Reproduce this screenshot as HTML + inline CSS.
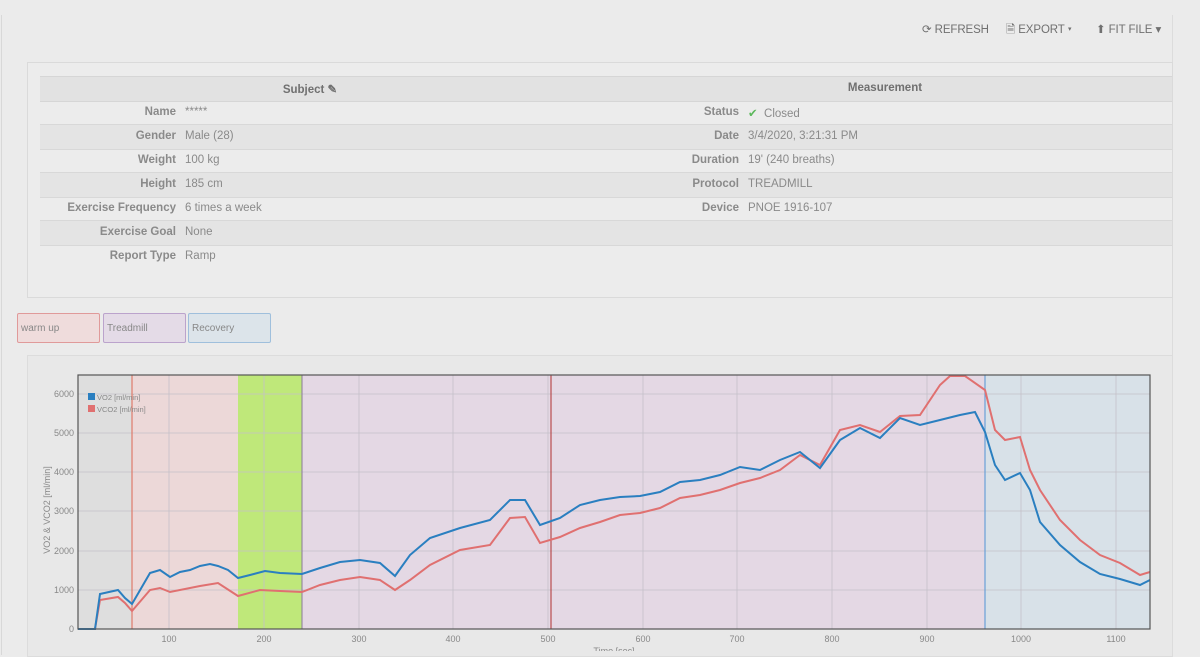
<!DOCTYPE html>
<html><head><meta charset="utf-8"><style>
body{margin:0;width:1200px;height:651px;overflow:hidden;background:#ebebeb;font-family:"Liberation Sans",sans-serif;position:relative}
.a{position:absolute}
.lbl{position:absolute;font-size:11.5px;font-weight:bold;color:#8a8a8a;text-align:right}
.val{position:absolute;font-size:11.5px;color:#8a8a8a}
.btn{position:absolute;top:22px;font-size:11.5px;color:#707070;letter-spacing:-.1px}
</style></head><body>
<div class="a" style="left:1px;top:15px;width:1px;height:640px;background:#d8d8d8"></div>
<div class="a" style="left:1172px;top:15px;width:1px;height:640px;background:#dcdcdc"></div>
<div class="btn" style="left:922px">⟳ REFRESH</div>
<div class="btn" style="left:1006px">🗎 EXPORT ▾</div>
<div class="btn" style="left:1096px">⬆ FIT FILE ▾</div>

<div class="a" style="left:27px;top:62px;width:1144px;height:234px;border:1px solid #dadada;background:#ececec"></div>
<div class="a" style="left:40px;top:76px;width:1132px;height:24px;background:#e2e2e2;border-top:1px solid #d6d6d6;border-bottom:1px solid #d6d6d6"></div>
<div class="a" style="left:40px;top:124px;width:1132px;height:24px;background:#e4e4e4;border-top:1px solid #d8d8d8;border-bottom:1px solid #d8d8d8"></div>
<div class="a" style="left:40px;top:172px;width:1132px;height:24px;background:#e4e4e4;border-top:1px solid #d8d8d8;border-bottom:1px solid #d8d8d8"></div>
<div class="a" style="left:40px;top:220px;width:1132px;height:24px;background:#e4e4e4;border-top:1px solid #d8d8d8;border-bottom:1px solid #d8d8d8"></div>
<div class="lbl" style="left:250px;top:82px;width:120px;text-align:center;color:#707070">Subject ✎</div>
<div class="lbl" style="left:820px;top:82px;width:130px;text-align:center;color:#707070">Measurement</div>

<div class="lbl" style="left:40px;width:136px;top:106px">Name</div><div class="val" style="left:185px;top:106px">*****</div>
<div class="lbl" style="left:40px;width:136px;top:130px">Gender</div><div class="val" style="left:185px;top:130px">Male (28)</div>
<div class="lbl" style="left:40px;width:136px;top:154px">Weight</div><div class="val" style="left:185px;top:154px">100 kg</div>
<div class="lbl" style="left:40px;width:136px;top:178px">Height</div><div class="val" style="left:185px;top:178px">185 cm</div>
<div class="lbl" style="left:40px;width:136px;top:202px">Exercise Frequency</div><div class="val" style="left:185px;top:202px">6 times a week</div>
<div class="lbl" style="left:40px;width:136px;top:226px">Exercise Goal</div><div class="val" style="left:185px;top:226px">None</div>
<div class="lbl" style="left:40px;width:136px;top:250px">Report Type</div><div class="val" style="left:185px;top:250px">Ramp</div>

<div class="lbl" style="left:600px;width:139px;top:106px">Status</div><div class="val" style="left:748px;top:106px"><span style="color:#5cb85c">✔</span>&nbsp;&nbsp;Closed</div>
<div class="lbl" style="left:600px;width:139px;top:130px">Date</div><div class="val" style="left:748px;top:130px">3/4/2020, 3:21:31 PM</div>
<div class="lbl" style="left:600px;width:139px;top:154px">Duration</div><div class="val" style="left:748px;top:154px">19' (240 breaths)</div>
<div class="lbl" style="left:600px;width:139px;top:178px">Protocol</div><div class="val" style="left:748px;top:178px">TREADMILL</div>
<div class="lbl" style="left:600px;width:139px;top:202px">Device</div><div class="val" style="left:748px;top:202px">PNOE 1916-107</div>

<div class="a" style="left:17px;top:313px;width:81px;height:28px;border:1px solid #e09a9a;background:#efdcdc;border-radius:2px;font-size:10px;color:#888;line-height:30px;text-indent:3px">warm up</div>
<div class="a" style="left:103px;top:313px;width:81px;height:28px;border:1px solid #bba3cc;background:#e4dbe7;border-radius:2px;font-size:10px;color:#888;line-height:30px;text-indent:3px">Treadmill</div>
<div class="a" style="left:188px;top:313px;width:81px;height:28px;border:1px solid #9fbfdc;background:#dce4ea;border-radius:2px;font-size:10px;color:#888;line-height:30px;text-indent:3px">Recovery</div>

<div class="a" style="left:27px;top:355px;width:1144px;height:300px;border:1px solid #dcdcdc;background:#e8e8e8"></div>
<svg class="a" style="left:0;top:0" width="1200" height="651" font-family="Liberation Sans" font-size="9" fill="#888">
<rect x="78" y="375" width="54" height="254" fill="#dedede"/>
<rect x="132" y="375" width="106" height="254" fill="#ecd8d8"/>
<rect x="238" y="375" width="64" height="254" fill="#bfe87a"/>
<rect x="302" y="375" width="683" height="254" fill="#e4d8e4"/>
<rect x="985" y="375" width="165" height="254" fill="#d8e1e8"/>
<g stroke="#c4c0c8" stroke-width="0.8">
<line x1="169" y1="375" x2="169" y2="629"/><line x1="264" y1="375" x2="264" y2="629"/><line x1="359" y1="375" x2="359" y2="629"/><line x1="453" y1="375" x2="453" y2="629"/><line x1="548" y1="375" x2="548" y2="629"/><line x1="643" y1="375" x2="643" y2="629"/><line x1="737" y1="375" x2="737" y2="629"/><line x1="832" y1="375" x2="832" y2="629"/><line x1="927" y1="375" x2="927" y2="629"/><line x1="1021" y1="375" x2="1021" y2="629"/><line x1="1116" y1="375" x2="1116" y2="629"/>
<line x1="78" y1="590" x2="1150" y2="590"/><line x1="78" y1="551" x2="1150" y2="551"/><line x1="78" y1="511" x2="1150" y2="511"/><line x1="78" y1="472" x2="1150" y2="472"/><line x1="78" y1="433" x2="1150" y2="433"/><line x1="78" y1="394" x2="1150" y2="394"/>
</g>
<line x1="132" y1="375" x2="132" y2="629" stroke="#e07a6a" stroke-width="1.2"/>
<line x1="551" y1="375" x2="551" y2="629" stroke="#b03030" stroke-width="1"/>
<line x1="302" y1="375" x2="302" y2="629" stroke="#8a7a9a" stroke-width="1"/>
<line x1="985" y1="375" x2="985" y2="629" stroke="#6aa0d8" stroke-width="1.2"/>
<polyline fill="none" stroke="#e07070" stroke-width="2" points="78,629 95,629 100,600 118,597 125,603 132,611 150,590 160,588 170,592 200,586 218,583 238,596 260,590 280,591 302,592 320,585 340,580 360,577 380,580 395,590 410,580 430,565 460,550 490,545 510,518 525,517 540,543 560,537 580,528 600,522 620,515 640,513 660,508 680,498 700,495 720,490 740,483 760,478 780,470 800,455 820,465 840,430 860,425 880,432 900,416 920,415 940,385 950,376 965,376 985,390 995,430 1005,440 1020,437 1030,470 1040,490 1060,520 1080,540 1100,555 1120,563 1140,575 1150,572"/>
<polyline fill="none" stroke="#2a7fc0" stroke-width="2" points="78,629 95,629 100,594 118,590 125,598 132,604 150,573 160,570 170,577 180,572 190,570 200,566 210,564 218,566 228,570 238,578 250,575 265,571 280,573 302,574 320,568 340,562 360,560 380,563 395,576 410,555 430,538 460,528 490,520 510,500 525,500 540,525 560,518 580,505 600,500 620,497 640,496 660,492 680,482 700,480 720,475 740,467 760,470 780,460 800,452 820,468 840,440 860,428 880,438 900,418 920,425 940,420 960,415 975,412 985,432 995,465 1005,480 1020,473 1030,490 1040,522 1060,545 1080,562 1100,574 1120,579 1140,585 1150,580"/>
<rect x="78" y="375" width="1072" height="254" fill="none" stroke="#555" stroke-width="1.2"/>
<rect x="88" y="393" width="7" height="7" fill="#2a7fc0"/><rect x="88" y="405" width="7" height="7" fill="#e07070"/>
<text x="97" y="400" font-size="7.5">VO2 [ml/min]</text><text x="97" y="412" font-size="7.5">VCO2 [ml/min]</text>
<g text-anchor="end"><text x="74" y="632">0</text><text x="74" y="593">1000</text><text x="74" y="554">2000</text><text x="74" y="514">3000</text><text x="74" y="475">4000</text><text x="74" y="436">5000</text><text x="74" y="397">6000</text></g>
<g text-anchor="middle"><text x="169" y="642">100</text><text x="264" y="642">200</text><text x="359" y="642">300</text><text x="453" y="642">400</text><text x="548" y="642">500</text><text x="643" y="642">600</text><text x="737" y="642">700</text><text x="832" y="642">800</text><text x="927" y="642">900</text><text x="1021" y="642">1000</text><text x="1116" y="642">1100</text>
<text x="614" y="654" font-size="9">Time [sec]</text>
<text transform="translate(50,510) rotate(-90)" font-size="9">VO2 &amp; VCO2 [ml/min]</text></g>
</svg>
</body></html>
